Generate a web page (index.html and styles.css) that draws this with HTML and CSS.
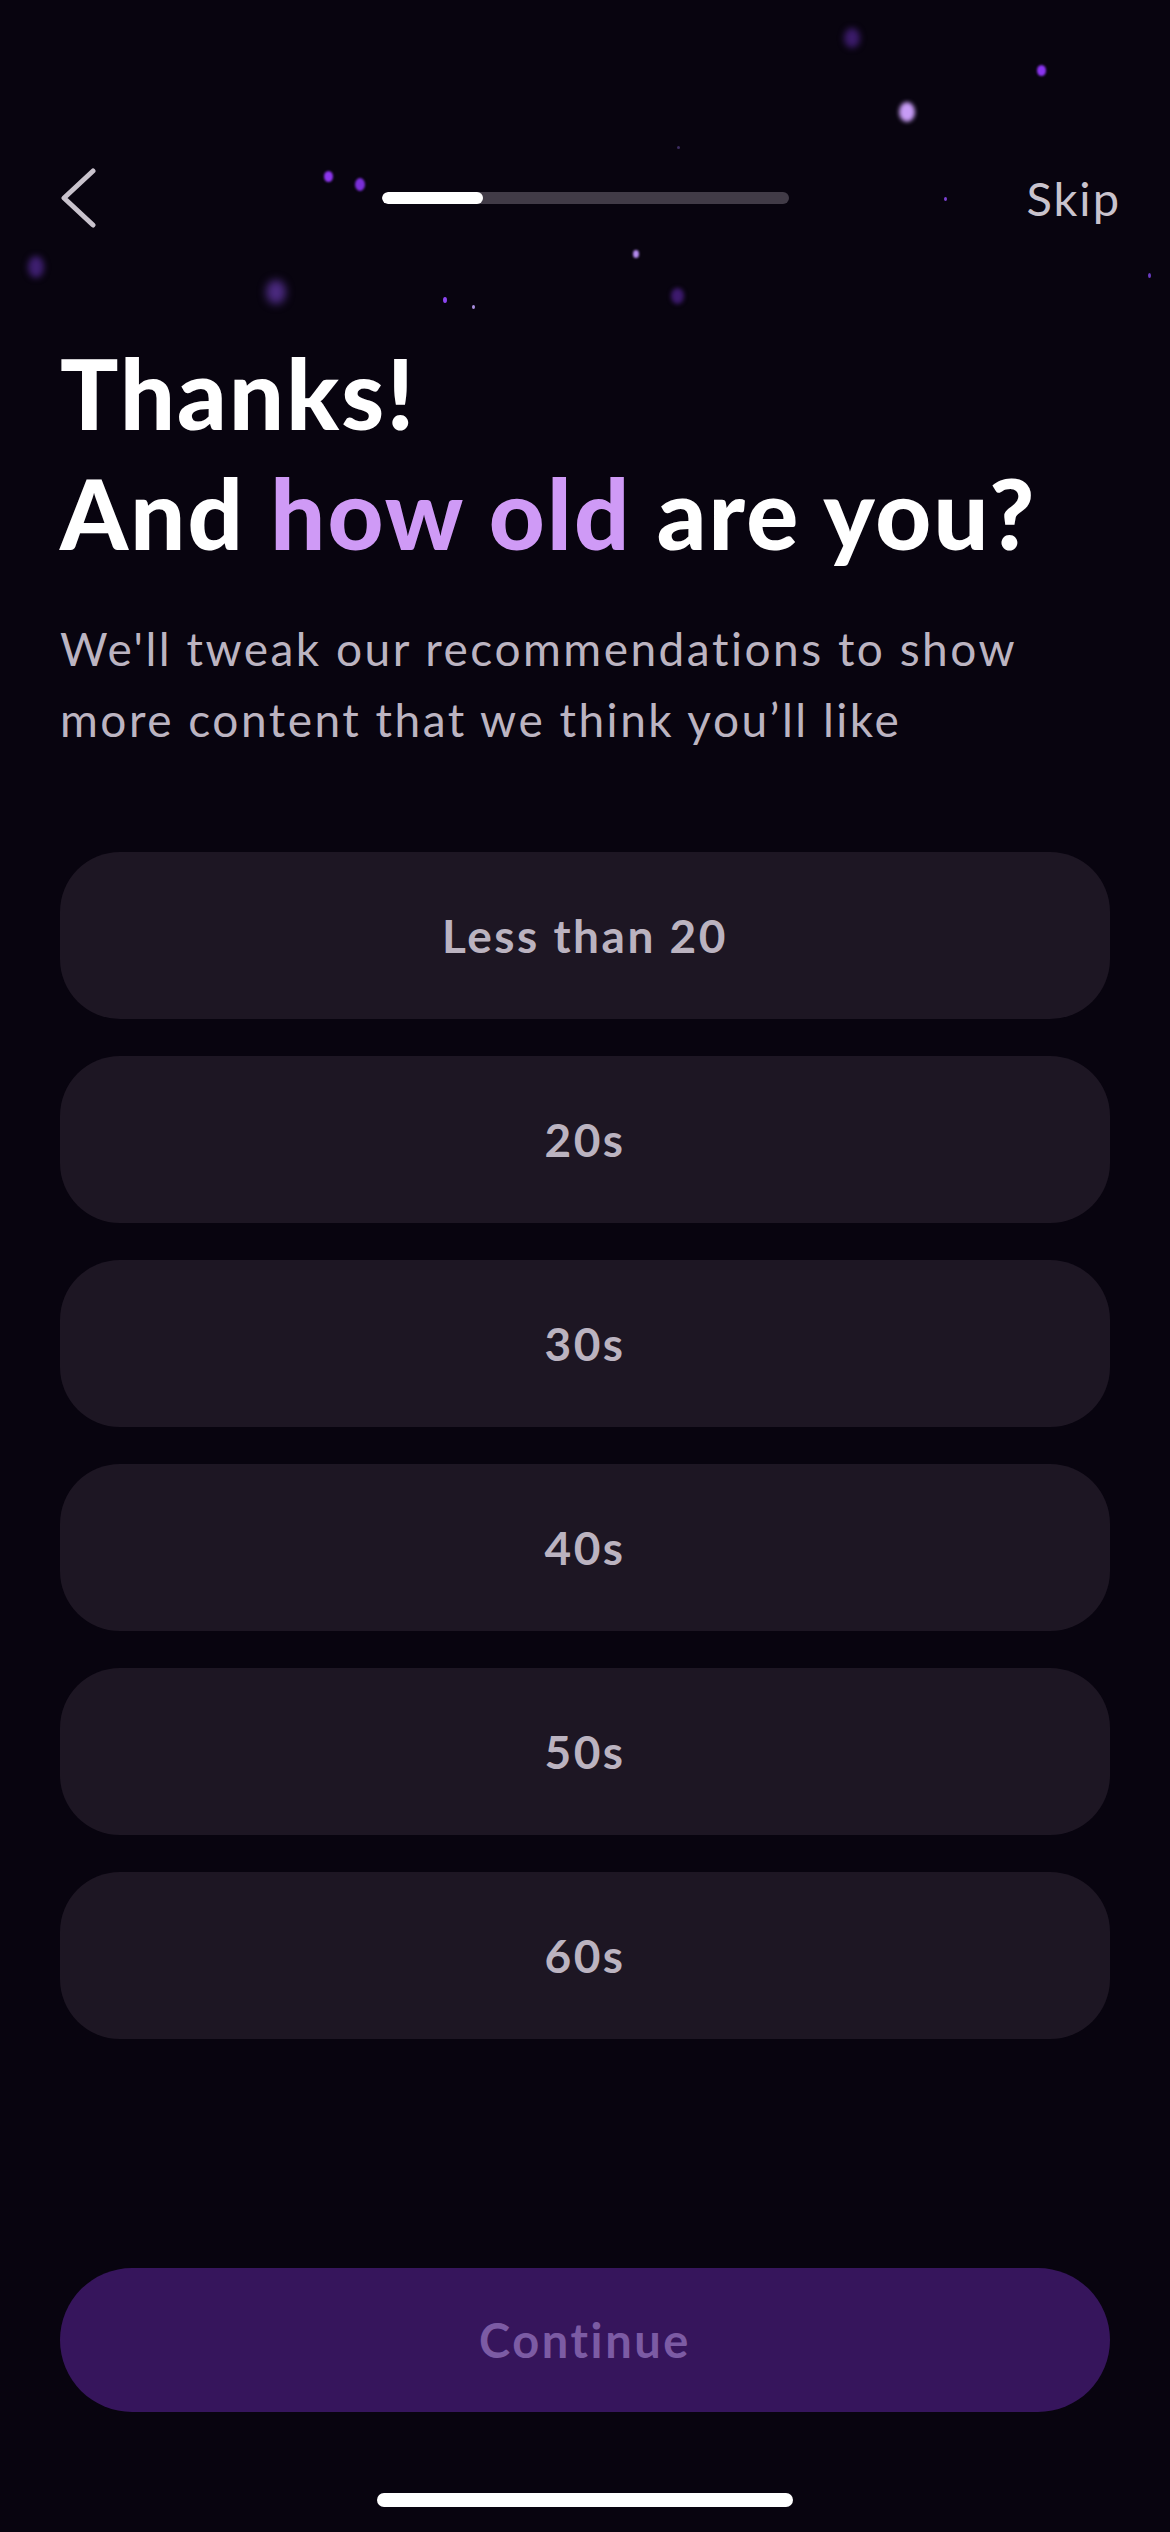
FILE: index.html
```html
<!DOCTYPE html>
<html lang="en">
<head>
<meta charset="utf-8">
<title>How old are you?</title>
<link rel="stylesheet" href="styles.css">
</head>
<body>
<div class="screen">
  <div class="particles" aria-hidden="true">
    <span class="dot d1"></span>
    <span class="dot d2"></span>
    <span class="dot d3"></span>
    <span class="dot d4"></span>
    <span class="dot d5"></span>
    <span class="dot d6"></span>
    <span class="dot d7"></span>
    <span class="dot d8"></span>
    <span class="dot d9"></span>
    <span class="dot d10"></span>
    <span class="dot d11"></span>
    <span class="dot d12"></span>
    <span class="dot d13"></span>
    <span class="dot d14"></span>
  </div>

  <header class="topbar">
    <button class="back" aria-label="Back">
      <svg width="40" height="60" viewBox="0 0 40 60"><polyline points="33,3 4,30 33,57" fill="none" stroke="#c9c3cd" stroke-width="5" stroke-linecap="round" stroke-linejoin="round"/></svg>
    </button>
    <div class="progress"><div class="progress-fill" style="width:25%"></div></div>
    <button class="skip">Skip</button>
  </header>

  <h1 class="title">Thanks!<br>And <span class="accent">how old</span> are you?</h1>
  <p class="subtitle">We'll tweak our recommendations to show more content that we think you’ll like</p>

  <div class="options">
    <button class="option">Less than 20</button>
    <button class="option">20s</button>
    <button class="option">30s</button>
    <button class="option">40s</button>
    <button class="option">50s</button>
    <button class="option">60s</button>
  </div>

  <button class="continue">Continue</button>
  <div class="home-indicator"></div>
</div>
</body>
</html>
```

FILE: styles.css
```css
* { box-sizing: border-box; }

html, body {
  margin: 0;
  padding: 0;
  background: #08040f;
}

body {
  font-family: Lato, "Noto Sans", sans-serif;
  color: #fff;
}

.screen {
  position: relative;
  width: 1170px;
  height: 2532px;
  overflow: hidden;
  display: flex;
  flex-direction: column;
  padding: 0 60px;
  background: #08040f;
}

.particles {
  position: absolute;
  inset: 0;
  pointer-events: none;
}

.dot {
  position: absolute;
  border-radius: 50%;
  background: #7d2fe6;
}
.d1 { left: 844px; top: 28px; width: 16px; height: 20px; background: #3b1b6a; filter: blur(3px); }
.d2 { left: 1037px; top: 65px; width: 9px; height: 11px; background: #8a34f0; filter: blur(1px); }
.d3 { left: 899px; top: 102px; width: 16px; height: 20px; background: #c79cf6; filter: blur(2px); }
.d4 { left: 324px; top: 171px; width: 9px; height: 11px; background: #8d36ee; filter: blur(1px); }
.d5 { left: 355px; top: 178px; width: 10px; height: 13px; background: #7a2fd8; filter: blur(1px); }
.d6 { left: 944px; top: 197px; width: 3px; height: 4px; background: #7a40d0; }
.d7 { left: 28px; top: 256px; width: 16px; height: 22px; background: #3e1f70; filter: blur(3px); }
.d8 { left: 266px; top: 280px; width: 20px; height: 24px; background: #4b2a80; filter: blur(4px); }
.d9 { left: 633px; top: 250px; width: 6px; height: 8px; background: #b58cf0; filter: blur(1px); }
.d10 { left: 671px; top: 288px; width: 13px; height: 16px; background: #3d1a6e; filter: blur(2px); }
.d11 { left: 443px; top: 297px; width: 4px; height: 6px; background: #8c45f0; }
.d12 { left: 472px; top: 305px; width: 3px; height: 4px; background: #a98fe0; }
.d13 { left: 1148px; top: 273px; width: 3px; height: 5px; background: #6a3bc0; }
.d14 { left: 677px; top: 146px; width: 3px; height: 3px; background: #3c2c60; }

.topbar {
  position: relative;
  margin-top: 168px;
  height: 60px;
  display: grid;
  grid-template-columns: 1fr auto 1fr;
  align-items: center;
}

.back {
  justify-self: start;
  background: none;
  border: 0;
  padding: 0;
  width: 40px;
  height: 60px;
  display: block;
  cursor: pointer;
}
.back svg { display: block; }

.progress {
  width: 407px;
  height: 12px;
  border-radius: 6px;
  background: #413b47;
  overflow: hidden;
}
.progress-fill {
  height: 100%;
  background: #ffffff;
  border-radius: 6px;
}

.skip {
  justify-self: end;
  margin-right: -11px;
  background: none;
  border: 0;
  padding: 0;
  font-family: Lato, "Noto Sans", sans-serif;
  font-size: 47px;
  font-weight: 400;
  letter-spacing: 2px;
  color: #c9c3cd;
  cursor: pointer;
}

.title {
  position: relative;
  margin: 105px 0 0;
  font-size: 97px;
  line-height: 120px;
  font-weight: 900;
  letter-spacing: 2.2px;
  color: #ffffff;
}
.accent { color: #cf9af6; }

.subtitle {
  position: relative;
  margin: 40px 0 0;
  font-size: 46px;
  line-height: 71px;
  font-weight: 400;
  letter-spacing: 2.5px;
  color: #bcb4c1;
}

.options {
  position: relative;
  margin-top: 97px;
  display: flex;
  flex-direction: column;
  gap: 37px;
}

.option {
  height: 167px;
  border: 0;
  border-radius: 60px;
  background: #1d1623;
  color: #bbb3c0;
  font-family: Lato, "Noto Sans", sans-serif;
  font-size: 46px;
  font-weight: 700;
  letter-spacing: 2.5px;
  cursor: pointer;
}

.continue {
  position: relative;
  margin-top: auto;
  height: 144px;
  border: 0;
  border-radius: 72px;
  background: #36155c;
  color: #7c5ba4;
  font-family: Lato, "Noto Sans", sans-serif;
  font-size: 47px;
  font-weight: 700;
  letter-spacing: 2.6px;
  cursor: default;
}

.home-indicator {
  align-self: center;
  width: 416px;
  height: 14px;
  border-radius: 7px;
  background: #ffffff;
  margin: 81px 0 25px;
}
```
